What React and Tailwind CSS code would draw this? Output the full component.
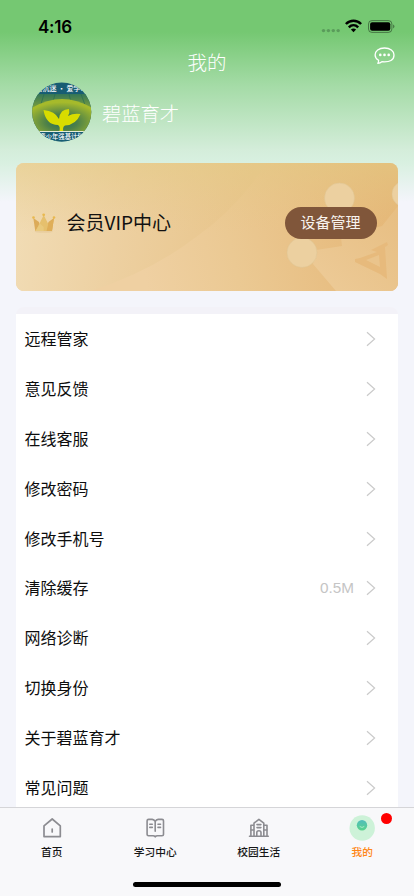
const rows = [
  { label: '远程管家' },
  { label: '意见反馈' },
  { label: '在线客服' },
  { label: '修改密码' },
  { label: '修改手机号' },
  { label: '清除缓存', value: '0.5M' },
  { label: '网络诊断' },
  { label: '切换身份' },
  { label: '关于碧蓝育才' },
  { label: '常见问题' },
];

function StatusBar() {
  return (
    <div className="flex h-[47px] shrink-0 items-start justify-between pr-[19px] pl-[38px]">
      <span className="mt-[16px] font-['Inter',sans-serif] text-[17px] leading-[22px] font-semibold tracking-[-0.2px] text-black">4:16</span>
      <div className="mt-[19px] flex h-[15px]">
        <svg width="20" height="15" viewBox="0 0 20 15" fill="#5a9b5b">
          <circle cx="3.5" cy="11.6" r="1.7" />
          <circle cx="8.4" cy="11.6" r="1.7" />
          <circle cx="13.3" cy="11.6" r="1.7" />
          <circle cx="18.2" cy="11.6" r="1.7" />
        </svg>
        <svg className="ml-[5px]" width="17" height="14" viewBox="0 0 17 14" fill="none" stroke="#000" strokeWidth="2.5">
          <path d="M.9 5C5.2 .6 11.8 .6 16.100 5" />
          <path d="M3.800 8.300C6.600 5.600 10.400 5.600 13.200 8.300" />
          <path d="M5.900 10.600Q8.500 8.400 11.100 10.600L8.500 13.300Z" fill="#000" stroke="none" />
        </svg>
        <svg className="ml-[6px]" width="27" height="14" viewBox="0 0 27 14">
          <rect x=".5" y="1.600" width="23.400" height="11.800" rx="3.400" fill="none" stroke="#000" strokeOpacity=".4" />
          <rect x="2.100" y="3.200" width="20.200" height="8.600" rx="2" />
          <path d="M25.200 5.600v3.800q1.200-.6 1.200-1.900t-1.200-1.900z" fillOpacity=".45" />
        </svg>
      </div>
    </div>
  );
}

function Avatar() {
  return (
    <svg width="60" height="60" viewBox="0 0 60 60" className="shrink-0">
      <defs>
        <clipPath id="avatarClip"><circle cx="29.700" cy="30" r="29.600" /></clipPath>
        <radialGradient id="avatarHill" cx=".5" cy=".7" r=".6">
          <stop offset="0" stopColor="#256d60" />
          <stop offset=".4" stopColor="#4c8049" />
          <stop offset="1" stopColor="#a6ba2b" />
        </radialGradient>
        <linearGradient id="avatarSky" x1="0" x2="0" y1="0" y2="1">
          <stop offset="0" stopColor="#347557" />
          <stop offset="1" stopColor="#86a637" />
        </linearGradient>
      </defs>
      <g clipPath="url(#avatarClip)">
        <rect width="60" height="60" fill="#175d73" />
        <rect y="12" width="60" height="16" fill="url(#avatarSky)" />
        <path d="M12 12L9 22M23 12L21 20M37 12L39 20M49 12L53 23" stroke="#276b55" strokeWidth=".7" />
        <path d="M-2 27Q30 7 62 27V50H-2Z" fill="url(#avatarHill)" />
        <path d="M27 50Q29 45 26 43Q14 43 11.500 28Q23 29 27 37Q28 27 37 27Q38 31 36 34Q41 31 48.500 32Q44 43 33 43.500Q30 45 31.500 50Z" fill="#d8dc00" />
        <rect y="49" width="60" height="1" fill="#e6efd9" />
        <rect y="50" width="60" height="10" fill="#175d73" />
        <g fill="#fff" className="font-['Noto_Sans_CJK_SC',sans-serif] font-medium">
          <text x="29.500" y="9" fontSize="7" textAnchor="middle">防沉迷 · 爱学习</text>
          <text x="29.500" y="57.200" fontSize="6.300" textAnchor="middle">青少年强基计划</text>
        </g>
      </g>
    </svg>
  );
}

function CardArt() {
  return (
    <svg className="absolute inset-0" width="382" height="128" viewBox="0 0 382 128">
      <defs>
        <linearGradient id="cardBase" gradientUnits="userSpaceOnUse" x1="130" y1="120" x2="382" y2="60">
          <stop offset="0" stopColor="#efd0a2" />
          <stop offset=".35" stopColor="#ebc993" />
          <stop offset="1" stopColor="#e5b676" />
        </linearGradient>
        <linearGradient id="cardArc" gradientUnits="userSpaceOnUse" x1="0" y1="30" x2="230" y2="60">
          <stop offset="0" stopColor="#f1dcb5" />
          <stop offset=".45" stopColor="#edd0a1" />
          <stop offset="1" stopColor="#e8c48a" />
        </linearGradient>
        <linearGradient id="topSheen" x1="0" x2="0" y1="0" y2="1">
          <stop offset="0" stopColor="#e3cb84" stopOpacity=".55" />
          <stop offset=".55" stopColor="#e8c88a" stopOpacity="0" />
        </linearGradient>
        <linearGradient id="cardFacet" x1="0" y1="1" x2="1" y2="0">
          <stop offset="0" stopColor="#edcb98" />
          <stop offset="1" stopColor="#e7be82" />
        </linearGradient>
      </defs>
      <rect width="382" height="128" fill="url(#cardBase)" />
      <path d="M0 0H251Q220 46 180 74Q136 108 75 128H0Z" fill="url(#cardArc)" />
      <rect width="382" height="128" fill="url(#topSheen)" />
      <path d="M300 87L326 83L325 74L366 63L382 43V128H320L297 101Z" fill="url(#cardFacet)" />
      <path d="M339 96L344 95L361 89L355 87L371 79L372 82L369 84L371 116L364 111L339 99Z" fill="#e7ba7c" />
      <path d="M350 97L363 92L364 104Z" fill="#eac48c" />
      <g fill="#ecd0a0" stroke="#dfc593" strokeWidth=".5">
        <circle cx="323.500" cy="35" r="15" />
        <circle cx="286" cy="89.500" r="15" />
        <circle cx="389" cy="31" r="13" />
      </g>
    </svg>
  );
}

function Crown() {
  return (
    <svg width="24" height="22" viewBox="0 0 24 22" className="shrink-0">
      <ellipse cx="11.700" cy="19.500" rx="9" ry="1.300" fill="#dfbd86" opacity=".4" />
      <path d="M1.300 6L7 10L9 19H3.300Z" fill="#dcab59" />
      <path d="M22 6L16.500 10L14.500 19H20Z" fill="#dcab59" />
      <path d="M3.500 19L8 10.500L11.700 3L15.500 10.500L20 19Z" fill="#e6c06d" />
      <path d="M3.500 19L8 11.500L11.700 15V19Z" fill="#e9c97c" />
      <path d="M14.500 19L16.500 11L22 6L20 19Z" fill="#dfae58" />
      <g fill="#e9b94f">
        <circle cx="1.500" cy="5.500" r="1.300" />
        <circle cx="11.700" cy="2.800" r="1.400" />
        <circle cx="22" cy="5.500" r="1.300" />
      </g>
    </svg>
  );
}

function Chevron() {
  return (
    <svg width="10" height="16" viewBox="0 0 10 16" fill="none" stroke="#cacaca" strokeWidth="1.200">
      <path d="M1 1.200L8.600 8L1 14.800" />
    </svg>
  );
}

function HomeIcon() {
  return (
    <svg width="20" height="22" viewBox="0 0 20 22" fill="none" stroke="#8c8c91" strokeWidth="1.700" strokeLinejoin="round" strokeLinecap="round">
      <path d="M2 8.900L10.200 2L18.300 8.900V19.600H2Z" />
      <path d="M10.200 12V15" />
    </svg>
  );
}

function BookIcon() {
  return (
    <svg width="20" height="22" viewBox="0 0 20 22" fill="none" stroke="#8c8c91" strokeWidth="1.600" strokeLinejoin="round" strokeLinecap="round">
      <path d="M10.200 4.500Q9.200 2.600 7.200 2.400H3.600Q2.100 2.400 2.100 3.800V17.600Q2.100 18.800 3.600 18.800H8Q9.500 18.800 10.200 19.800Q10.900 18.800 12.500 18.800H17Q18.500 18.800 18.500 17.600V3.800Q18.500 2.400 17 2.400H13.200Q11.200 2.600 10.200 4.500V14.300" />
      <path d="M4.800 7.200H7.300M4.800 10.400H7.300M13 7.200H15.500M13 10.400H15.500" />
    </svg>
  );
}

function CampusIcon() {
  return (
    <svg width="22" height="22" viewBox="0 0 22 22" fill="none" stroke="#8c8c91" strokeWidth="1.600" strokeLinejoin="round" strokeLinecap="round">
      <path d="M1.500 19.300H20.300M6 19V6.200L10.900 2.300L15.800 6.200V19M6 8.300H2.900V19M15.800 8.300H19V19" />
      <path d="M8.800 19V15.500Q8.800 13.800 10.900 13.800T13 15.500V19" />
      <path d="M9 7.600H12.900M9 10.600H12.900M3.200 13H5.500M16.300 13H18.700" />
    </svg>
  );
}

function MineIcon() {
  return (
    <svg width="26" height="26" viewBox="0 0 26 26">
      <defs>
        <linearGradient id="face" x1="0" y1="0" x2="0" y2="1">
          <stop offset="0" stopColor="#51bdbc" />
          <stop offset="1" stopColor="#59d38c" />
        </linearGradient>
      </defs>
      <circle cx="13.200" cy="13" r="12.700" fill="#cdf2d8" />
      <circle cx="13" cy="10.200" r="5.200" fill="url(#face)" />
      <path d="M11 11.700Q13 13.500 15 11.700" fill="none" stroke="#b9f0d0" strokeWidth=".8" strokeLinecap="round" />
    </svg>
  );
}

function Tab({ icon, label, active }) {
  return (
    <div className="flex flex-1 flex-col items-center">
      <div className="flex h-[26px] items-center justify-center">{icon}</div>
      <span className={`mt-[3px] text-[10.700px] leading-4 font-medium ${active ? 'text-[#ff8717]' : 'text-[#161616]'}`}>{label}</span>
    </div>
  );
}

export default function App() {
  return (
    <div className="flex h-[896px] w-[414px] flex-col overflow-hidden bg-[#f4f5fb] bg-[linear-gradient(180deg,#75c872_0px,#75c872_32px,#a4dba6_85px,#d4edda_150px,#d8f0e0_162px,#f4f5fb_202px)] font-['Noto_Sans_CJK_SC',sans-serif]">
      <StatusBar />

      <header className="grid h-[35px] shrink-0 grid-cols-[1fr_auto_1fr] items-start">
        <h1 className="col-start-2 mt-px text-[19.500px] leading-7 font-light text-white">我的</h1>
        <svg className="mr-[19px] justify-self-end" width="21" height="18" viewBox="0 0 21 18">
          <path d="M10.500 1C4.800 1 1.100 4 1.100 7.900Q1.100 11 4.600 13.300Q4.700 15.100 3.800 16.300Q6.200 16.100 7.900 14.700Q20 15.700 20 7.900C20 4 16.200 1 10.500 1Z" fill="none" stroke="#fff" strokeWidth="1.300" strokeLinejoin="round" />
          <g fill="#fff">
            <circle cx="6.300" cy="7.900" r="1.300" />
            <circle cx="10.500" cy="7.900" r="1.300" />
            <circle cx="14.700" cy="7.900" r="1.300" />
          </g>
        </svg>
      </header>

      <section className="flex h-[81px] shrink-0 items-start pl-[32px]">
        <Avatar />
        <p className="mt-[17px] ml-[10px] text-[19.300px] leading-7 font-light text-white">碧蓝育才</p>
      </section>

      <section className="relative mx-4 h-[128px] shrink-0 overflow-hidden rounded-[8px]">
        <CardArt />
        <div className="relative flex h-full items-center pr-[21px] pb-[8px] pl-[16px]">
          <Crown />
          <span className="-mt-[2px] ml-[10.500px] text-[19px] leading-7 text-[#111]">会员VIP中心</span>
          <button className="ml-auto flex h-[32px] w-[92px] items-center justify-center rounded-full bg-[#80563a] pr-px pb-px text-[15px] text-[#f8f3ee]">设备管理</button>
        </div>
      </section>

      <main className="mx-4 mt-4 min-h-0 flex-1 overflow-hidden rounded-t-[8px] bg-[#f3f2f8] pt-[7px]">
        <ul className="bg-white">
          {rows.map((row) => (
            <li key={row.label} className="flex h-[49.900px] items-center pr-[22px] pl-[8.500px]">
              <span className="-mt-[2px] text-[16px] leading-6 text-[#0d0d0d]">{row.label}</span>
              <span className="mr-[12px] ml-auto font-['Liberation_Sans',sans-serif] text-[15.300px] text-[#c5c5c5]">{row.value}</span>
              <Chevron />
            </li>
          ))}
        </ul>
      </main>

      <nav className="relative flex h-[89px] shrink-0 flex-col border-t border-[#d5d5d8] bg-[#f8f8fa]">
        <div className="flex pt-[7px]">
          <Tab icon={<HomeIcon />} label="首页" />
          <Tab icon={<BookIcon />} label="学习中心" />
          <Tab icon={<CampusIcon />} label="校园生活" />
          <Tab icon={<MineIcon />} label="我的" active />
        </div>
        <span className="absolute top-[5px] right-[22px] size-[11px] rounded-full bg-[#ff0000]" />
        <div className="mx-auto mt-auto mb-[9px] h-[5px] w-[148px] rounded-full bg-black" />
      </nav>
    </div>
  );
}
